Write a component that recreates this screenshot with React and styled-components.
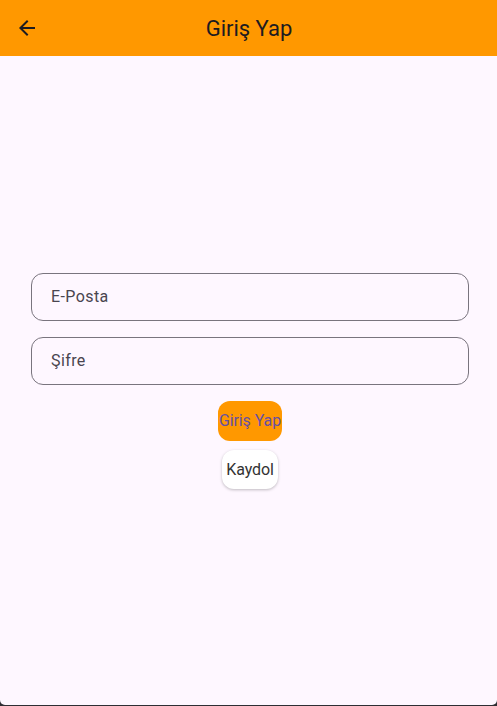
import React from 'react';
import styled, { createGlobalStyle } from 'styled-components';

const GlobalStyle = createGlobalStyle`
  html, body {
    margin: 0;
    padding: 0;
    background: #2e2e33;
    font-family: Roboto, "Noto Sans", sans-serif;
  }
`;

const Screen = styled.div`
  width: 497px;
  height: 705px;
  display: flex;
  flex-direction: column;
  background: #fef7ff;
  border-radius: 0 0 5px 5px;
  overflow: hidden;
`;

const AppBar = styled.header`
  height: 56px;
  flex-shrink: 0;
  background: #ff9800;
  display: flex;
  align-items: center;
  position: relative;
`;

const BackButton = styled.button`
  width: 40px;
  height: 40px;
  margin-left: 7px;
  border: none;
  background: transparent;
  display: flex;
  align-items: center;
  justify-content: center;
  padding: 0;
  cursor: pointer;
`;

const Title = styled.h1`
  position: absolute;
  left: 1px;
  right: 0;
  margin: 0;
  text-align: center;
  font-size: 22px;
  font-weight: 400;
  color: #1d1b20;
  pointer-events: none;
`;

const Body = styled.main`
  flex: 1;
  display: flex;
  flex-direction: column;
  justify-content: center;
  align-items: center;
  padding: 0 28px 0 31px;
`;

const Form = styled.div`
  width: 100%;
  display: flex;
  flex-direction: column;
  gap: 16px;
`;

const Field = styled.div`
  height: 46px;
  border: 1px solid #79747e;
  border-radius: 12px;
  display: flex;
  align-items: center;
  padding-left: 19px;
  font-size: 16px;
  letter-spacing: 0.4px;
  color: #49454f;
`;

const Actions = styled.div`
  display: flex;
  flex-direction: column;
  align-items: center;
  gap: 9px;
  margin-top: 16px;
`;

const Button = styled.button`
  height: ${p => (p.$primary ? 40 : 39)}px;
  padding: 0 ${p => (p.$primary ? 0 : 4)}px;
  min-width: ${p => (p.$primary ? 64 : 56)}px;
  border: none;
  border-radius: 12px;
  background: ${p => (p.$primary ? '#ff9800' : '#ffffff')};
  color: ${p => (p.$primary ? '#6750a4' : '#333333')};
  box-shadow: ${p => (p.$primary ? 'none' : '0 1px 3px rgba(0,0,0,0.25)')};
  font-family: Roboto, sans-serif;
  font-size: 16px;
  font-weight: 400;
  letter-spacing: -0.1px;
  white-space: nowrap;
  cursor: pointer;
`;

const BackIcon = () => (
  <svg width="24" height="24" viewBox="0 0 24 24">
    <path d="M20 11H7.83l5.59-5.59L12 4l-8 8 8 8 1.41-1.41L7.83 13H20v-2z" fill="#1d1b20" />
  </svg>
);

export default function App() {
  return (
    <>
      <GlobalStyle />
      <Screen>
        <AppBar>
          <BackButton aria-label="Geri">
            <BackIcon />
          </BackButton>
          <Title>Giriş Yap</Title>
        </AppBar>
        <Body>
          <Form>
            <Field>E-Posta</Field>
            <Field>Şifre</Field>
          </Form>
          <Actions>
            <Button $primary>Giriş Yap</Button>
            <Button>Kaydol</Button>
          </Actions>
        </Body>
      </Screen>
    </>
  );
}
